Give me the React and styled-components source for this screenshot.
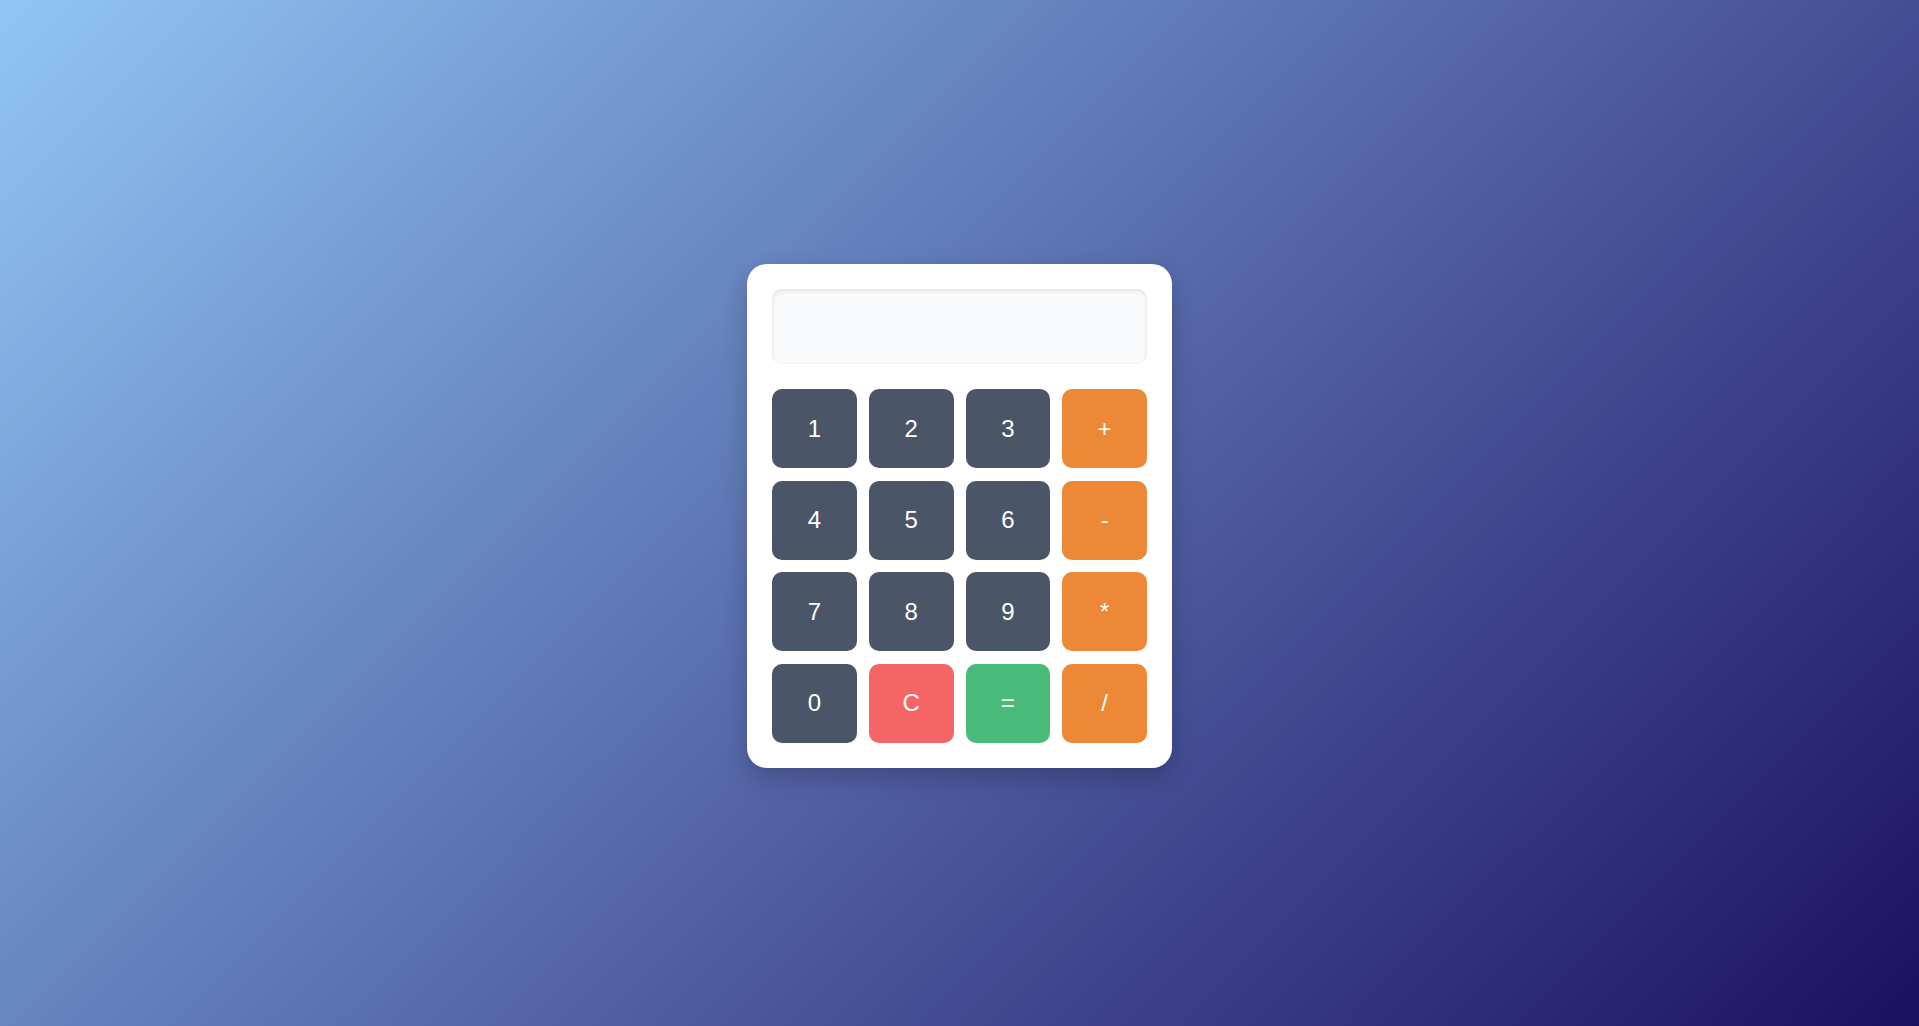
import React from "react";
import styled, { createGlobalStyle } from "styled-components";

const GlobalStyle = createGlobalStyle`
  html, body {
    margin: 0;
    padding: 0;
  }
  body {
    font-family: "Liberation Sans", Arial, sans-serif;
  }
  * { box-sizing: border-box; }
`;

const Page = styled.div`
  min-height: 100vh;
  padding-top: 6px;
  display: flex;
  align-items: center;
  justify-content: center;
  background: linear-gradient(135deg, #90c6f3 0%, #5669aa 50%, #1c1060 100%);
`;

const Card = styled.div`
  width: 425px;
  padding: 25px;
  background: #ffffff;
  border-radius: 20px;
  box-shadow: 0 10px 25px rgba(0, 0, 0, 0.2);
`;

const Display = styled.div`
  height: 75px;
  margin-bottom: 25px;
  background: #f8f9fa;
  border-radius: 10px;
  box-shadow: inset 0 2px 4px rgba(0, 0, 0, 0.08), inset 0 0 2px rgba(0, 0, 0, 0.06);
  display: flex;
  align-items: center;
  justify-content: flex-end;
  padding: 0 16px;
  font-size: 32px;
  color: #2d3748;
`;

const Keys = styled.div`
  display: grid;
  grid-template-columns: repeat(4, 1fr);
  column-gap: 12px;
  row-gap: 12.6px;
`;

const colors = {
  num: "#4a5568",
  op: "#ed8936",
  clear: "#f56565",
  equal: "#48bb78",
};

const Key = styled.button`
  height: 79px;
  border: none;
  border-radius: 10px;
  background: ${(p) => colors[p.$kind]};
  color: #ffffff;
  font-family: "Liberation Sans", Arial, sans-serif;
  font-size: 24px;
  cursor: pointer;
  display: flex;
  align-items: center;
  justify-content: center;
  padding: 0;
`;

const keys = [
  ["1", "num"], ["2", "num"], ["3", "num"], ["+", "op"],
  ["4", "num"], ["5", "num"], ["6", "num"], ["-", "op"],
  ["7", "num"], ["8", "num"], ["9", "num"], ["*", "op"],
  ["0", "num"], ["C", "clear"], ["=", "equal"], ["/", "op"],
];

export default function App() {
  return (
    <>
      <GlobalStyle />
      <Page>
        <Card>
          <Display />
          <Keys>
            {keys.map(([label, kind]) => (
              <Key key={label} $kind={kind}>
                {label}
              </Key>
            ))}
          </Keys>
        </Card>
      </Page>
    </>
  );
}
